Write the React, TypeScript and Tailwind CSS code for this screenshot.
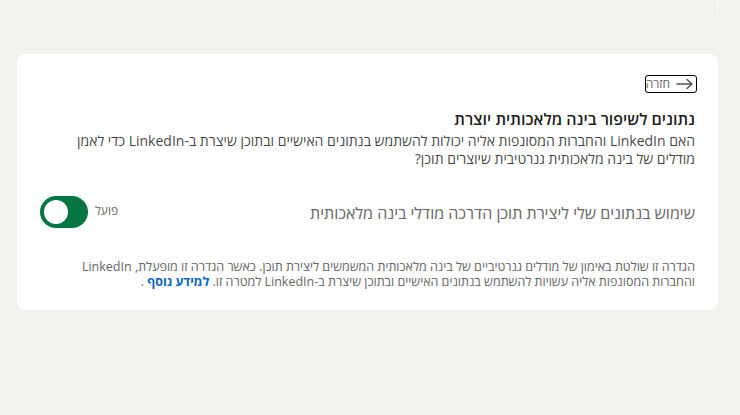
import React from "react";

export default function App() {
  return (
    <div
      className="w-[740px] h-[415px] bg-[#f3f2ef] relative overflow-hidden"
      style={{ fontFamily: '"Open Sans", "Liberation Sans", sans-serif' }}
    >
      <div className="absolute left-[717px] top-0 w-px h-[15px] bg-[#fcfcfb]" />
      <div className="pt-[54px] pl-[17px] pr-[22px]">
        <div dir="rtl" className="bg-white rounded-lg h-[256px] pr-[21px] pl-[23px] pt-[21px]">
          <div className="flex justify-start">
            <button className="flex items-center gap-[6px] border-[1.5px] border-black rounded-[3px] h-[18px] w-[52px] pr-[2px] text-[12px] text-[#666] leading-none">
              <svg width="18" height="12" viewBox="0 0 18 12" className="shrink-0">
                <path d="M1 6h15M11 1.5L16 6l-5 4.5" fill="none" stroke="#555" strokeWidth="1.5" strokeLinecap="round" strokeLinejoin="round" />
              </svg>
              <span>חזרה</span>
            </button>
          </div>
          <div className="pr-[2px]">
            <h2 className="mt-[16px] text-[16px] font-semibold leading-[20px] text-[#000000e6]">
              נתונים לשיפור בינה מלאכותית יוצרת
            </h2>
            <p className="mt-[3px] text-[14px] leading-[18px] text-[#000000bf]">
              האם LinkedIn והחברות המסונפות אליה יכולות להשתמש בנתונים האישיים ובתוכן שיצרת ב-LinkedIn כדי לאמן מודלים של בינה מלאכותית גנרטיבית שיוצרים תוכן?
            </p>
            <div className="mt-[28px] flex items-center justify-between">
              <span className="text-[16px] text-[#666] leading-[20px]">
                שימוש בנתונים שלי ליצירת תוכן הדרכה מודלי בינה מלאכותית
              </span>
              <div className="flex items-center gap-[7px] pb-[2px]">
                <span className="text-[12px] text-[#666] -mt-[2px]">פועל</span>
                <div className="w-[48px] h-[32px] rounded-full bg-[#057642] flex items-center justify-end pl-[4px]">
                  <div className="w-[24px] h-[24px] rounded-full bg-white" />
                </div>
              </div>
            </div>
            <p className="mt-[29px] text-[12.5px] leading-[15px] text-[#666]">
              הגדרה זו שולטת באימון של מודלים גנרטיביים של בינה מלאכותית המשמשים ליצירת תוכן. כאשר הגדרה זו מופעלת, LinkedIn והחברות המסונפות אליה עשויות להשתמש בנתונים האישיים ובתוכן שיצרת ב-LinkedIn למטרה זו.{" "}
              <a className="font-bold text-[#0a66c2]">למידע נוסף</a> .
            </p>
          </div>
        </div>
      </div>
    </div>
  );
}
